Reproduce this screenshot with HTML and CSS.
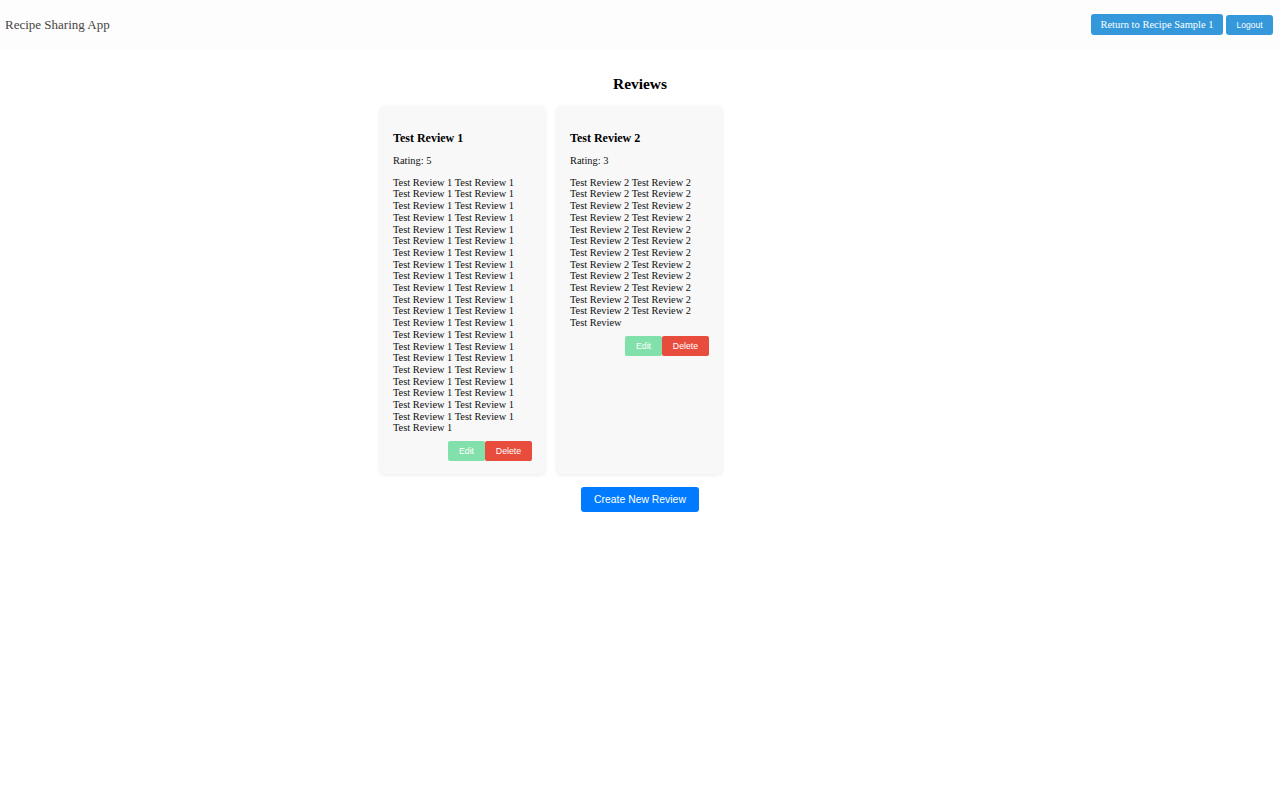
FILE: index.html
```html
<!DOCTYPE html>
<html lang="en">
<head>
<meta charset="utf-8">
<title>Reviews</title>
<link rel="stylesheet" href="styles.css">
</head>
<body>
<header class="topbar">
  <div class="brand">Recipe Sharing App</div>
  <nav class="nav">
    <a class="btn-return" href="#">Return to Recipe Sample 1</a>
    <button class="btn-logout">Logout</button>
  </nav>
</header>
<main class="main">
  <h2 class="page-title">Reviews</h2>
  <div class="review-grid">
    <article class="card">
      <h3 class="card-title">Test Review 1</h3>
      <p class="rating">Rating: 5</p>
      <p class="body">Test Review 1 Test Review 1 Test Review 1 Test Review 1 Test Review 1 Test Review 1 Test Review 1 Test Review 1 Test Review 1 Test Review 1 Test Review 1 Test Review 1 Test Review 1 Test Review 1 Test Review 1 Test Review 1 Test Review 1 Test Review 1 Test Review 1 Test Review 1 Test Review 1 Test Review 1 Test Review 1 Test Review 1 Test Review 1 Test Review 1 Test Review 1 Test Review 1 Test Review 1 Test Review 1 Test Review 1 Test Review 1 Test Review 1 Test Review 1 Test Review 1 Test Review 1 Test Review 1 Test Review 1 Test Review 1 Test Review 1 Test Review 1 Test Review 1 Test Review 1</p>
      <div class="actions">
        <button class="btn-edit">Edit</button><button class="btn-delete">Delete</button>
      </div>
    </article>
    <article class="card">
      <h3 class="card-title">Test Review 2</h3>
      <p class="rating">Rating: 3</p>
      <p class="body">Test Review 2 Test Review 2 Test Review 2 Test Review 2 Test Review 2 Test Review 2 Test Review 2 Test Review 2 Test Review 2 Test Review 2 Test Review 2 Test Review 2 Test Review 2 Test Review 2 Test Review 2 Test Review 2 Test Review 2 Test Review 2 Test Review 2 Test Review 2 Test Review 2 Test Review 2 Test Review 2 Test Review 2 Test Review</p>
      <div class="actions">
        <button class="btn-edit">Edit</button><button class="btn-delete">Delete</button>
      </div>
    </article>
  </div>
  <div class="create-row">
    <button class="btn-create">Create New Review</button>
  </div>
</main>
</body>
</html>
```

FILE: styles.css
```css
html, body {
  margin: 0;
  padding: 0;
  background: #ffffff;
}

body {
  font-family: "Liberation Serif", "Times New Roman", serif;
  font-size: 10.4px;
  color: #111;
}

.topbar {
  height: 50px;
  box-sizing: border-box;
  display: flex;
  align-items: center;
  justify-content: space-between;
  padding: 0 7px 0 5px;
  background: #fdfdfd;
}

.brand {
  font-size: 13px;
  color: #444;
}

.nav {
  display: flex;
  align-items: center;
  gap: 3px;
  padding-bottom: 1px;
}

.btn-return {
  display: inline-flex;
  align-items: center;
  justify-content: center;
  height: 21px;
  width: 132px;
  box-sizing: border-box;
  background: #3498db;
  color: #fff;
  text-decoration: none;
  font-size: 10.5px;
  border-radius: 3px;
}

.btn-logout {
  height: 20px;
  width: 47px;
  box-sizing: border-box;
  padding: 0;
  border: none;
  background: #3498db;
  color: #fff;
  font-family: "Liberation Sans", Arial, sans-serif;
  font-size: 8.5px;
  border-radius: 3px;
  margin-top: 1px;
}

.main {
  display: flex;
  flex-direction: column;
  align-items: center;
}

.page-title {
  font-size: 15.4px;
  font-weight: bold;
  margin: 25px 0 13px;
  line-height: 18px;
  color: #000;
}

.review-grid {
  display: grid;
  grid-template-columns: repeat(3, 165px);
  gap: 12px;
  margin-right: 1px;
}

.card {
  background: #f8f8f8;
  border-radius: 5px;
  box-shadow: 0 1px 4px rgba(0, 0, 0, 0.09);
  padding: 13px;
  box-sizing: border-box;
}

.card-title {
  font-size: 12px;
  line-height: 14px;
  margin: 12px 0 10px;
  color: #000;
}

.rating {
  margin: 0 0 10px;
  line-height: 11.7px;
}

.body {
  margin: 0 8px 7px 0;
  line-height: 11.7px;
}

.actions {
  display: flex;
  justify-content: flex-end;
}

.actions button {
  height: 20px;
  border: none;
  color: #fff;
  font-family: "Liberation Sans", Arial, sans-serif;
  font-size: 8.8px;
  padding: 0;
  border-radius: 2px;
}

.btn-edit {
  width: 37px;
  background: #82e0aa;
}

.btn-delete {
  width: 47px;
  background: #e74c3c;
}

.create-row {
  margin-top: 13px;
}

.btn-create {
  width: 118px;
  height: 25px;
  border: none;
  border-radius: 3px;
  background: #007bff;
  color: #fff;
  font-family: "Liberation Sans", Arial, sans-serif;
  font-size: 10.4px;
  padding: 0;
}
```
